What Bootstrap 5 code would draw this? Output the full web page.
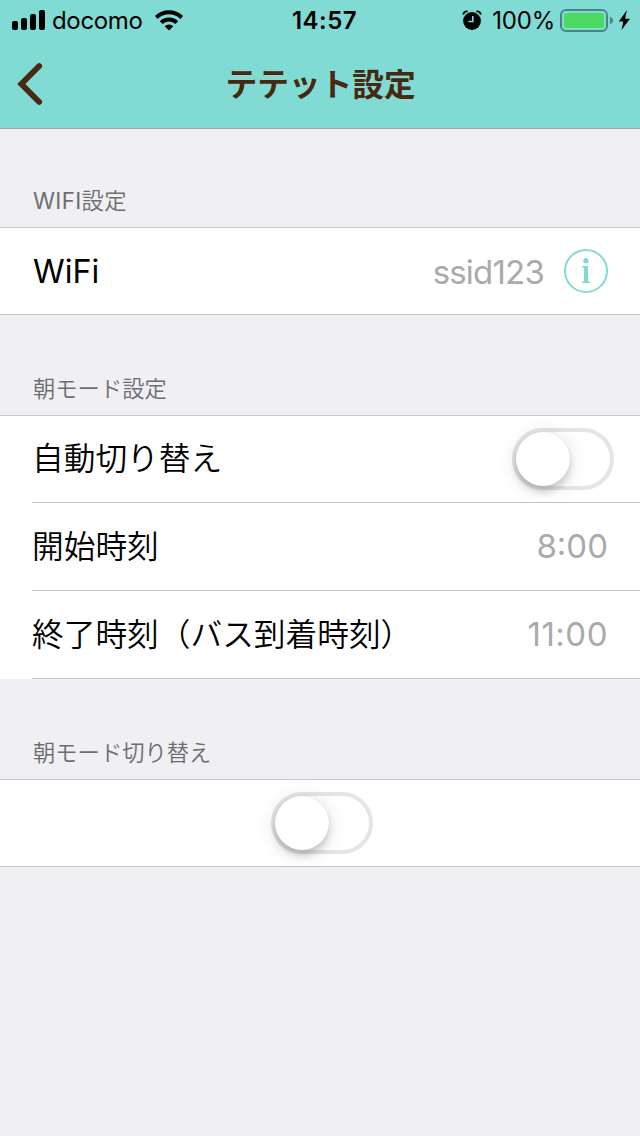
<!DOCTYPE html>
<html lang="ja">
<head>
<meta charset="utf-8">
<meta name="viewport" content="width=device-width, initial-scale=1">
<title>テテット設定</title>
<link href="https://cdn.jsdelivr.net/npm/bootstrap@5.3.0/dist/css/bootstrap.min.css" rel="stylesheet">
<style>
  body { background: #efeff4; color: #000; font-family: Inter, "Noto Sans CJK JP", sans-serif; }
  .top-area { height: 129px; background: #80dbd4; border-bottom: 1px solid #a5a8a9; }
  .status-bar { height: 40px; font-size: 24px; line-height: 38px; padding: 0 9px 0 12px; }
  .status-side { width: 250px; }
  .status-side span, .clock { padding-top: 2px; }
  .carrier { margin-left: 6px; letter-spacing: -.35px; }
  .wifi-icon { margin-left: 9px; }
  .clock { font-weight: 600; letter-spacing: .5px; margin-left: 6px; }
  .percent { margin-left: 10px; letter-spacing: -.2px; }
  .battery { margin-left: 3px; }
  .title-bar { height: 88px; }
  .page-title { font-size: 31.7px; font-weight: 700; color: #482810; line-height: 90px; padding-left: 1px; }
  .back-button { width: 64px; left: 0; top: 0; }
  .section-title { height: 100px; padding: 0 32px 9px 33px; font-size: 22.3px; line-height: 34px; color: #6d6d72; font-weight: 350; }
  .top-section { height: 98px; letter-spacing: .35px; font-weight: 400; }
  .top-section .jp-part { font-weight: 350; }
  .settings { --bs-list-group-bg: #fff; border-top: 1px solid #c8c7cc; }
  .setting { height: 88px; padding: 0 32px 1px; border: 0; color: #000; font-size: 31.7px; line-height: 86px; background: linear-gradient(#c8c7cc, #c8c7cc) 32px 100% / 100% 1px no-repeat #fff; }
  .full-line { background-position: 0 100%; }
  .full-line, .auto-row { height: 87px; }
  .auto-row { padding-right: 26px; }
  .center-row { padding: 0 30px 1px 34px; }
  .network-name { padding: 2px 0 0 1px; font-size: 32.2px; }
  .jp-label { font-weight: 350; }
  .setting-value { color: #aaa; font-size: 33px; font-weight: 400; padding-bottom: 2px; }
  .time-value { letter-spacing: .5px; }
  .ssid-value { letter-spacing: -.8px; margin-right: 20px; padding: 2px 0 0; }
  .toggle-track { width: 102px; height: 62px; border: 4px solid #e5e5e5; border-radius: 31px; }
  .toggle-knob { display: block; width: 54px; height: 54px; border-radius: 50%; background: #fff; box-shadow: 0 6px 6px rgba(0,0,0,.14), 0 3px 20px rgba(0,0,0,.14), 0 0 1px rgba(0,0,0,.15); }
</style>
</head>
<body>
<header class="top-area">
  <div class="status-bar d-flex justify-content-between">
    <div class="status-side d-flex align-items-center">
      <svg width="34" height="20" viewBox="0 0 34 20"><rect y="11" width="6" height="9" rx="2"/><rect x="9" y="8" width="6" height="12" rx="2"/><rect x="18" y="4" width="6" height="16" rx="2"/><rect x="27" width="6" height="20" rx="2"/></svg>
      <span class="carrier">docomo</span>
      <svg class="wifi-icon" width="34" height="22" viewBox="0 0 34 22"><g fill="none" stroke="#000" stroke-width="4"><path d="M4.300 8.500a18 18 0 0 1 25.400 0"/><path d="M9.200 13.600a11.200 11.200 0 0 1 15.600 0"/></g><path d="M17 21.500l-4.300-4.300a6.200 6.200 0 0 1 8.600 0z"/></svg>
    </div>
    <span class="clock">14:57</span>
    <div class="status-side d-flex align-items-center justify-content-end">
      <svg width="20" height="20" viewBox="0 0 20 20"><circle cx="10" cy="11" r="8.900"/><path d="M1.200 4.600A4 4 0 0 1 5.600 1.500M18.800 4.600A4 4 0 0 0 14.400 1.500" fill="none" stroke="#000" stroke-width="1.800"/><path d="M10.800 6v5.500H6.500" fill="none" stroke="#80dbd4" stroke-width="1.600"/></svg>
      <span class="percent">100%</span>
      <svg class="battery" width="73" height="24" viewBox="0 0 73 24"><rect x="3" y="2" width="46" height="21" rx="5" fill="none" stroke="#4d8480" stroke-width="2"/><rect x="6" y="5" width="40" height="15" rx="2" fill="#4cd964"/><path d="M52 8.500q6 4 0 8z" fill="#4d8480"/><path d="M69 2L60.800 13.500h4.500L63.500 22 72 10.700h-5z"/></svg>
    </div>
  </div>
  <div class="title-bar position-relative text-center">
    <a class="back-button position-absolute" href="#" aria-label="戻る"><svg class="d-block" width="64" height="88" viewBox="0 0 64 88"><path d="M39.200 26L21.300 44l17.900 18" fill="none" stroke="#482810" stroke-width="5.800" stroke-linecap="round" stroke-linejoin="miter"/></svg></a>
    <h1 class="page-title m-0">テテット設定</h1>
  </div>
</header>
<main>
  <h2 class="section-title top-section d-flex align-items-end m-0">WIFI<span class="jp-part">設定</span></h2>
  <div class="list-group list-group-flush settings">
    <div class="list-group-item setting full-line d-flex justify-content-between align-items-center">
      <span class="network-name">WiFi</span>
      <span class="d-flex align-items-center"><span class="setting-value ssid-value">ssid123</span>
      <svg width="44" height="44" viewBox="0 0 44 44" fill="#80dbd4"><circle cx="22" cy="22" r="21" fill="none" stroke="#80dbd4" stroke-width="2"/><circle cx="22" cy="11.700" r="2.700"/><path d="M18 17h6v15.500h2V34h-8v-1.500h2v-14h-2z"/></svg></span>
    </div>
  </div>
  <h2 class="section-title d-flex align-items-end m-0">朝モード設定</h2>
  <div class="list-group list-group-flush settings">
    <div class="list-group-item setting jp-label auto-row d-flex justify-content-between align-items-center">
      <span>自動切り替え</span><span class="toggle-track"><span class="toggle-knob"></span></span>
    </div>
    <div class="list-group-item setting jp-label d-flex justify-content-between align-items-center">
      <span>開始時刻</span><span class="setting-value">8:00</span>
    </div>
    <div class="list-group-item setting jp-label d-flex justify-content-between align-items-center">
      <span>終了時刻（バス到着時刻）</span><span class="setting-value time-value">11:00</span>
    </div>
  </div>
  <h2 class="section-title d-flex align-items-end m-0">朝モード切り替え</h2>
  <div class="list-group list-group-flush settings">
    <div class="list-group-item setting full-line center-row d-flex justify-content-center align-items-center">
      <span class="toggle-track"><span class="toggle-knob"></span></span>
    </div>
  </div>
</main>
<script src="https://cdn.jsdelivr.net/npm/bootstrap@5.3.0/dist/js/bootstrap.bundle.min.js"></script>
</body>
</html>
